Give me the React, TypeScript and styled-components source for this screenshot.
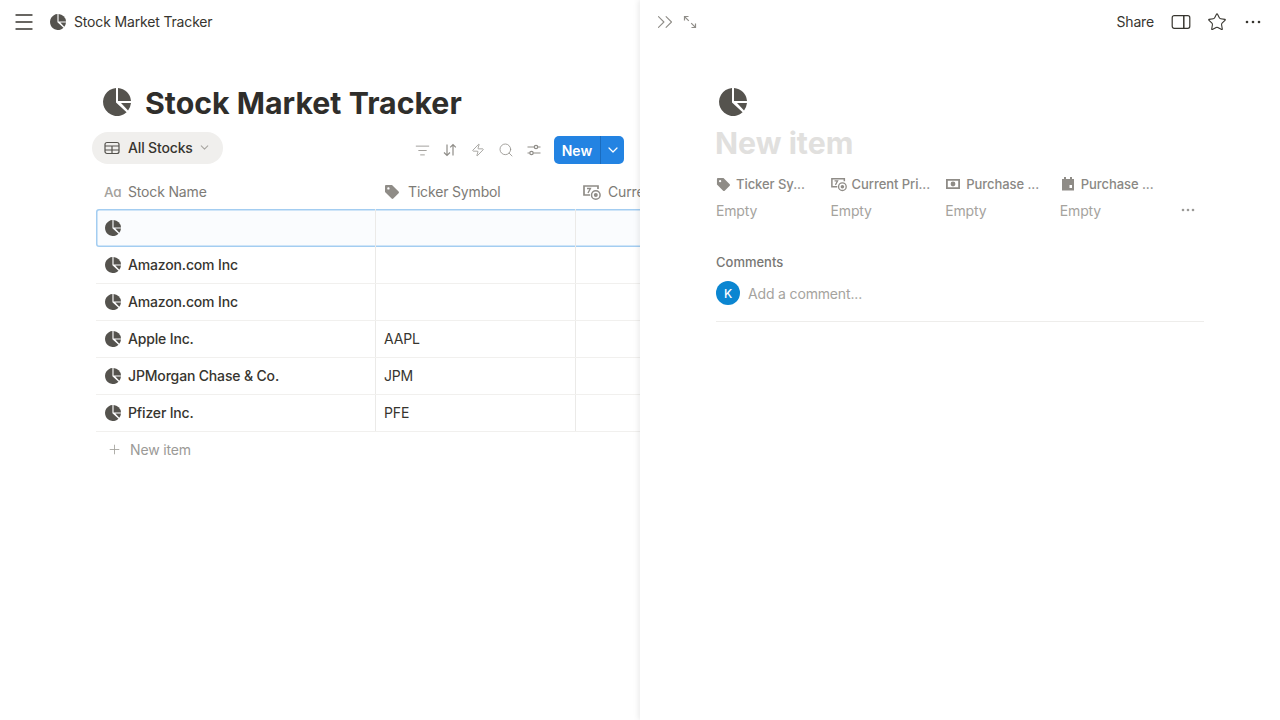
import React from 'react';
import styled, { createGlobalStyle } from 'styled-components';
import { ChevronDown, ChevronsRight, ListFilter, Menu, Plus, Search, Star, Zap } from 'lucide-react';

const GlobalStyle = createGlobalStyle`
    html, body { margin: 0; padding: 0; background: #fff; height: 100%; overflow: hidden; }
    body { font-family: Inter, "Liberation Sans", sans-serif; color: #37352f; letter-spacing: -0.16px; }
    #root { height: 100%; }
    * { box-sizing: border-box; }
`;

const Page = styled.div`
    display: flex;
    width: 1280px;
    height: 720px;
`;

const Main = styled.main`
    width: 640px;
    flex: none;
    overflow: hidden;
    display: flex;
    flex-direction: column;
`;

const TopBar = styled.header`
    height: 44px;
    flex: none;
    display: flex;
    align-items: center;
    padding-left: 12px;
    color: #37352f;
`;

const MenuButton = styled.span`
    display: flex;
    margin-right: 14px;
`;

const BreadcrumbTitle = styled.span`
    font-size: 14px;
    margin-left: 8px;
    padding-bottom: 1px;
    color: #37352f;
`;

const TitleRow = styled.div`
    display: flex;
    align-items: center;
    gap: 14px;
    padding: 30px 0 0 103px;
    height: 86px;
    flex: none;
`;

const PageTitle = styled.h1`
    margin: 1px 0 0;
    font-size: 30.3px;
    font-weight: 700;
    line-height: 36px;
    color: #2f2e2b;
    letter-spacing: 0;
`;

const ViewBar = styled.div`
    display: flex;
    align-items: flex-start;
    justify-content: space-between;
    padding: 2px 16px 0 92px;
    height: 44px;
    flex: none;
`;

const ViewPill = styled.div`
    width: 131px;
    height: 32px;
    border-radius: 16px;
    background: #f0efed;
    display: flex;
    align-items: center;
    padding: 0 0 1px 12px;
    gap: 8px;
    font-size: 14px;
    font-weight: 500;
    color: #37352f;
    svg.chev { color: #a8a6a1; margin-left: -3px; }
`;

const Tools = styled.div`
    display: flex;
    align-items: center;
    margin-top: 4px;
    height: 28px;
`;

const ToolSlot = styled.div`
    width: 28px;
    height: 28px;
    display: flex;
    align-items: center;
    justify-content: center;
    color: #8f8d88;
`;

const NewButton = styled.div`
    margin-left: 6px;
    width: 70px;
    height: 28px;
    border-radius: 5px;
    background: #2383e2;
    color: #fff;
    display: flex;
    align-items: stretch;
    font-size: 14px;
    font-weight: 600;
    letter-spacing: 0.1px;
`;

const NewLabel = styled.span`
    width: 47px;
    display: flex;
    align-items: center;
    justify-content: center;
    border-right: 1px solid #1a6cbe;
`;

const NewCaret = styled.span`
    flex: 1;
    display: flex;
    align-items: center;
    justify-content: center;
`;

const Table = styled.div`
    margin-left: 96px;
    width: 700px;
`;

const HeaderRow = styled.div`
    display: flex;
    height: 35px;
`;

const HeaderCell = styled.div<{ $width: number }>`
    width: ${p => p.$width}px;
    flex: none;
    display: flex;
    align-items: center;
    gap: 8px;
    padding-left: 8px;
    font-size: 14px;
    color: #7d7b76;
    white-space: nowrap;
`;

const CurrencySlot = styled.span`
    display: flex;
    margin: 0 -1px 0 -1px;
`;

const AaMark = styled.span`
    width: 16px;
    font-size: 13.5px;
    font-weight: 500;
    color: #a4a29d;
    letter-spacing: -0.2px;
`;

const Row = styled.div<{ $selected?: boolean }>`
    display: flex;
    height: ${p => (p.$selected ? 38 : 37)}px;
    border-bottom: 1px solid #f1f0ee;
    ${p => p.$selected && `
        background: #fafcfe;
        border-bottom: none;
        box-shadow: inset 0 0 0 1.5px #a3cdf1;
        border-radius: 3px 0 0 3px;
    `}
`;

const NameCell = styled.div`
    width: 280px;
    flex: none;
    display: flex;
    align-items: center;
    gap: 7px;
    padding: 0 0 1px 9px;
    border-right: 1px solid #ebeae8;
    font-size: 14px;
    font-weight: 500;
    color: #37352f;
`;

const TextCell = styled.div`
    width: 200px;
    flex: none;
    display: flex;
    align-items: center;
    padding: 0 0 1px 8px;
    border-right: 1px solid #ebeae8;
    font-size: 14px;
    color: #37352f;
`;

const AddRow = styled.div`
    display: flex;
    align-items: center;
    gap: 8px;
    height: 35px;
    padding-left: 11px;
    font-size: 14px;
    color: #9b9a97;
`;

const Peek = styled.aside`
    flex: 1;
    min-width: 0;
    background: #fff;
    box-shadow: -1px 0 6px rgba(15, 15, 15, 0.1);
    position: relative;
    display: flex;
    flex-direction: column;
`;

const PeekBar = styled.div`
    height: 44px;
    flex: none;
    display: flex;
    align-items: center;
    padding: 0 13px 0 12px;
    color: #8f8d88;
    gap: 4px;
`;

const ShareLabel = styled.span`
    margin-left: auto;
    margin-right: 5px;
    padding-bottom: 1px;
    font-size: 14px;
    color: #37352f;
`;

const BarIcon = styled.span`
    width: 28px;
    height: 24px;
    margin-left: 4px;
    display: flex;
    align-items: center;
    justify-content: center;
    color: #37352f;
`;

const PeekBody = styled.div`
    padding: 44px 76px 0 76px;
`;

const PeekIconWrap = styled.div`
    height: 28px;
    padding-left: 3px;
`;

const ItemTitle = styled.div`
    font-size: 30.3px;
    font-weight: 700;
    line-height: 36px;
    margin: 9px 0 0 -1px;
    color: #e1e0de;
    letter-spacing: 0;
`;

const PropGrid = styled.div`
    display: grid;
    grid-template-columns: repeat(4, 114.6px) 1fr;
    margin-top: 11px;
`;

const PropName = styled.div`
    display: flex;
    align-items: center;
    gap: 5px;
    height: 24px;
    font-size: 13px;
    font-weight: 500;
    color: #8a8884;
    white-space: nowrap;
    letter-spacing: -0.06px;
`;

const PropEmpty = styled.div`
    height: 30px;
    margin-top: -1px;
    display: flex;
    align-items: center;
    font-size: 14px;
    color: #a5a39e;
`;

const MoreDots = styled(PropEmpty)`
    justify-content: flex-end;
    padding-right: 9px;
    color: #9b9a97;
`;

const CommentsLabel = styled.div`
    margin-top: 27px;
    font-size: 13px;
    font-weight: 500;
    line-height: 20px;
    color: #787774;
    letter-spacing: 0;
`;

const CommentRow = styled.div`
    display: flex;
    align-items: center;
    gap: 8px;
    margin-top: 9px;
    padding-bottom: 16px;
    border-bottom: 1px solid #eeedeb;
    font-size: 14px;
    color: #a5a39e;
`;

const Avatar = styled.div`
    width: 24px;
    height: 24px;
    border-radius: 50%;
    background: #0b86d1;
    color: #fff;
    display: flex;
    align-items: center;
    justify-content: center;
    font-size: 12px;
    font-weight: 500;
`;

const Glyph = styled.svg`
    flex: none;
    display: block;
`;

const Pie = ({ size }: { size: number }) => (
    <Glyph width={size} height={size} viewBox="0 0 28 28" fill="#55534e">
        <path d="M13 0A14 14 0 1 0 23.6 24.2L13 14.6Z" />
        <path d="M15 0A14 14 0 0 1 28 13H15Z" />
        <path d="M18 15H28A14 14 0 0 1 25 22.4Z" />
    </Glyph>
);

const TableGlyph = () => (
    <Glyph width="16" height="16" viewBox="0 0 16 16" fill="none" stroke="#55534e" strokeWidth="1.2">
        <rect x="1" y="2.5" width="14" height="11" rx="2" />
        <path d="M1 6h14M1 10h14M8 6v7.5" />
    </Glyph>
);

const SortGlyph = () => (
    <Glyph width="16" height="16" viewBox="0 0 16 16" fill="none" stroke="currentColor" strokeWidth="1.2">
        <path d="M5 2.5v11M2 10.5l3 3 3-3M11 13.5v-11M8.2 5.3L11 2.5l2.8 2.8" />
    </Glyph>
);

const SlidersGlyph = () => (
    <Glyph width="16" height="16" viewBox="0 0 16 16" fill="none" stroke="currentColor" strokeWidth="1.2">
        <path d="M1.5 5H8.3M11.7 5H14.5M1.5 11H3.8M7.2 11H14.5" />
        <circle cx="10" cy="5" r="1.7" />
        <circle cx="5.5" cy="11" r="1.7" />
    </Glyph>
);

const ExpandGlyph = () => (
    <Glyph width="16" height="16" viewBox="0 0 16 16" fill="none" stroke="currentColor" strokeWidth="1.2">
        <path d="M2.5 6.5V2.5h4M2.8 2.8l4 4M13.5 9.5v4h-4M13.2 13.2l-4-4" />
    </Glyph>
);

const TagGlyph = ({ size }: { size: number }) => (
    <Glyph width={size} height={size} viewBox="0 0 16 16" fill="#8f8c87">
        <path fillRule="evenodd" d="M1 2.2C1 1.5 1.5 1 2.2 1H8l6.6 6.6c.5.5.5 1.2 0 1.7l-5.3 5.3c-.5.5-1.2.5-1.7 0L1 8ZM4.4 3.2a1.2 1.2 0 1 0 0 2.4 1.2 1.2 0 0 0 0-2.4Z" />
    </Glyph>
);

const CurrencyGlyph = ({ size }: { size: number }) => (
    <Glyph width={size} height={size} viewBox="0 0 18 18" fill="none">
        <path d="M7 12H1V3h14v3" stroke="#8f8c87" strokeWidth="1.7" />
        <path d="M4 5.5h3.4L5 10" stroke="#8f8c87" strokeWidth="1.4" />
        <circle cx="12.8" cy="12" r="4.3" stroke="#8f8c87" strokeWidth="1.5" />
        <circle cx="12.8" cy="12" r="2" fill="#8f8c87" />
    </Glyph>
);

const MoneyGlyph = () => (
    <Glyph width="16" height="16" viewBox="0 0 16 16">
        <path fill="#8f8c87" fillRule="evenodd" d="M1 3h14v10H1ZM2.8 4.8v6.4h10.4V4.8ZM8 5.6a2.4 2.4 0 1 0 0 4.8 2.4 2.4 0 0 0 0-4.8Z" />
    </Glyph>
);

const CalendarGlyph = () => (
    <Glyph width="16" height="16" viewBox="0 0 16 16">
        <path fill="#8f8c87" fillRule="evenodd" d="M4 1h2v2h4V1h2v2h2v11.5H2V3h2ZM9.5 9v3H12V9Z" />
    </Glyph>
);

const PanelGlyph = () => (
    <Glyph width="20" height="16" viewBox="0 0 20 16" fill="none" stroke="currentColor" strokeWidth="1.2">
        <rect x="1.2" y="1.7" width="17.6" height="12.6" rx="2" />
        <path d="M12.8 1.7v12.6" strokeWidth="1.5" />
    </Glyph>
);

const Dots = ({ color, gap }: { color: string; gap: number }) => (
    <Glyph width={gap * 2 + 4} height="4" fill={color}>
        <circle cx="2" cy="2" r="1.3" />
        <circle cx={2 + gap} cy="2" r="1.3" />
        <circle cx={2 + gap * 2} cy="2" r="1.3" />
    </Glyph>
);

const rows = [
    { name: 'Amazon.com Inc', ticker: '' },
    { name: 'Amazon.com Inc', ticker: '' },
    { name: 'Apple Inc.', ticker: 'AAPL' },
    { name: 'JPMorgan Chase & Co.', ticker: 'JPM' },
    { name: 'Pfizer Inc.', ticker: 'PFE' },
];

const TrackerTable = () => (
    <Table>
        <HeaderRow>
            <HeaderCell $width={280}><AaMark>Aɑ</AaMark>Stock Name</HeaderCell>
            <HeaderCell $width={200}><TagGlyph size={16} />Ticker Symbol</HeaderCell>
            <HeaderCell $width={200}><CurrencySlot><CurrencyGlyph size={18} /></CurrencySlot>Current Price</HeaderCell>
        </HeaderRow>
        <Row $selected>
            <NameCell><Pie size={16} /></NameCell>
            <TextCell />
            <TextCell />
        </Row>
        {rows.map((row, i) => (
            <Row key={i}>
                <NameCell><Pie size={16} />{row.name}</NameCell>
                <TextCell>{row.ticker}</TextCell>
                <TextCell />
            </Row>
        ))}
        <AddRow><Plus size={15} strokeWidth={1.4} color="#a5a39e" />New item</AddRow>
    </Table>
);

const props = [
    { icon: <TagGlyph size={15} />, label: 'Ticker Sy...' },
    { icon: <CurrencyGlyph size={16} />, label: 'Current Pri...' },
    { icon: <MoneyGlyph />, label: 'Purchase ...' },
    { icon: <CalendarGlyph />, label: 'Purchase ...' },
];

export default function App() {
    return (
        <Page>
            <GlobalStyle />
            <Main>
                <TopBar>
                    <MenuButton><Menu size={24} strokeWidth={1.4} /></MenuButton>
                    <Pie size={16} />
                    <BreadcrumbTitle>Stock Market Tracker</BreadcrumbTitle>
                </TopBar>
                <TitleRow>
                    <Pie size={28} />
                    <PageTitle>Stock Market Tracker</PageTitle>
                </TitleRow>
                <ViewBar>
                    <ViewPill>
                        <TableGlyph />
                        All Stocks
                        <ChevronDown className="chev" size={13} />
                    </ViewPill>
                    <Tools>
                        <ToolSlot><ListFilter size={15} strokeWidth={1.3} /></ToolSlot>
                        <ToolSlot><SortGlyph /></ToolSlot>
                        <ToolSlot><Zap size={14} strokeWidth={1.3} /></ToolSlot>
                        <ToolSlot><Search size={16} strokeWidth={1.2} /></ToolSlot>
                        <ToolSlot><SlidersGlyph /></ToolSlot>
                        <NewButton>
                            <NewLabel>New</NewLabel>
                            <NewCaret><ChevronDown size={16} strokeWidth={1.8} /></NewCaret>
                        </NewButton>
                    </Tools>
                </ViewBar>
                <TrackerTable />
            </Main>
            <Peek>
                <PeekBar>
                    <ChevronsRight size={26} strokeWidth={1} />
                    <ExpandGlyph />
                    <ShareLabel>Share</ShareLabel>
                    <BarIcon><PanelGlyph /></BarIcon>
                    <BarIcon><Star size={20} strokeWidth={1.3} /></BarIcon>
                    <BarIcon><Dots color="#37352f" gap={6} /></BarIcon>
                </PeekBar>
                <PeekBody>
                    <PeekIconWrap><Pie size={28} /></PeekIconWrap>
                    <ItemTitle>New item</ItemTitle>
                    <PropGrid>
                        {props.map((p, i) => <PropName key={i}>{p.icon}{p.label}</PropName>)}
                        <span />
                        {props.map((_, i) => <PropEmpty key={i}>Empty</PropEmpty>)}
                        <MoreDots><Dots color="#9b9a97" gap={5} /></MoreDots>
                    </PropGrid>
                    <CommentsLabel>Comments</CommentsLabel>
                    <CommentRow>
                        <Avatar>K</Avatar>
                        Add a comment...
                    </CommentRow>
                </PeekBody>
            </Peek>
        </Page>
    );
}
